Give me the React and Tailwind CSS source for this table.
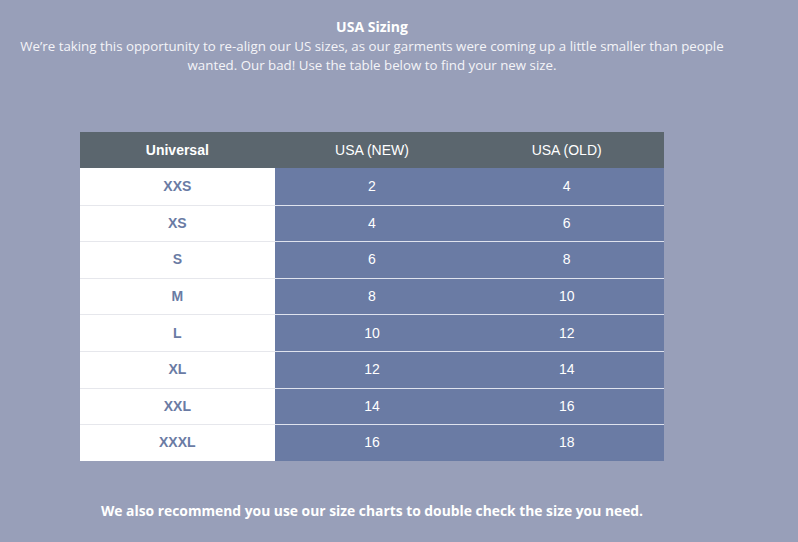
import React from 'react';

const rows = [
  ['XXS', '2', '4'],
  ['XS', '4', '6'],
  ['S', '6', '8'],
  ['M', '8', '10'],
  ['L', '10', '12'],
  ['XL', '12', '14'],
  ['XXL', '14', '16'],
  ['XXXL', '16', '18'],
];

export default function App() {
  return (
    <div className="w-[798px] h-[542px] bg-[#989fb9] overflow-hidden">
      <div className="w-[744px] flex flex-col items-center pt-[17px] font-['Open_Sans',sans-serif] text-[#f4f4f8]">
        <h1 className="text-[14px] font-bold leading-[20px] text-white">USA Sizing</h1>
        <p className="text-[13.3px] leading-[19px] text-center px-[12px]">
          We’re taking this opportunity to re-align our US sizes, as our garments were coming up a little smaller than people wanted. Our bad! Use the table below to find your new size.
        </p>

        <div className="mt-[57px] w-[584px] font-['Liberation_Sans',Arial,sans-serif] text-[14px]">
          <div className="grid grid-cols-3 h-[36px] bg-[#5b666e] text-white items-center text-center">
            <div className="font-bold">Universal</div>
            <div>USA (NEW)</div>
            <div>USA (OLD)</div>
          </div>
          {rows.map(([u, n, o], i) => (
            <div key={u} className="grid grid-cols-3 h-[36.6px] text-center">
              <div className={`bg-white flex items-center justify-center font-bold text-[#6a7ba4] ${i > 0 ? 'border-t border-[#e6e7ec]' : ''}`}>{u}</div>
              <div className={`bg-[#6a7ba4] flex items-center justify-center text-white ${i > 0 ? 'border-t border-[#dfe3ee]' : ''}`}>{n}</div>
              <div className={`bg-[#6a7ba4] flex items-center justify-center text-white ${i > 0 ? 'border-t border-[#dfe3ee]' : ''}`}>{o}</div>
            </div>
          ))}
        </div>

        <p className="mt-[40px] text-[13.85px] font-bold text-white leading-[20px]">
          We also recommend you use our size charts to double check the size you need.
        </p>
      </div>
    </div>
  );
}
